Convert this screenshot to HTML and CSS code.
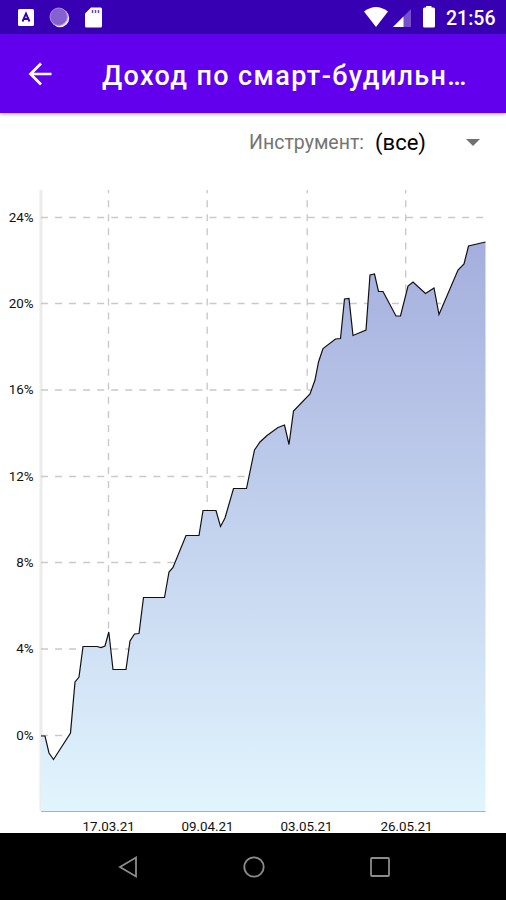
FILE: index.html
```html
<!DOCTYPE html>
<html lang="ru">
<head>
    <meta charset="UTF-8">
    <meta name="viewport" content="width=device-width, initial-scale=1.0">
    <title>Доход по смарт-будильнику</title>
    <link rel="stylesheet" href="styles.css">
</head>
<body>
    <div class="status-bar">
        <svg class="status-icons" width="110" height="34" viewBox="0 0 110 34">
            <rect x="18" y="9" width="16" height="17" rx="1.5" fill="#fff"/>
            <path d="M22.500 21.500L26 13.500L29.500 21.500M24 19H28" fill="none" stroke="#3700b3" stroke-width="1.900"/>
            <circle cx="60" cy="18" r="9.2" fill="#eee5fa"/>
            <circle cx="58.7" cy="16.7" r="8.7" fill="#8560d0"/>
            <circle cx="58.7" cy="16.7" r="8.7" fill="none" stroke="#a98be0"/>
            <path d="M91 7.500H100.500Q102 7.500 102 9V26Q102 27.500 100.500 27.500H86.500Q85 27.500 85 26V13.500Z" fill="#fff"/>
            <path d="M92.500 10V13M95.500 10V13M98.500 10V13" stroke="#6b45c4" stroke-width="1.5"/>
        </svg>
        <svg class="status-icons" width="76" height="34" viewBox="0 0 76 34">
            <path d="M1 11.500Q13 2.500 25 11.500L13 27Z" fill="#fff"/>
            <path d="M48 9V27H30Z" fill="#7650cc"/>
            <path d="M40.500 16.500V27H30Z" fill="#fff"/>
            <path d="M63 7.500V6H68.500V7.500H70.500Q72 7.500 72 9V26Q72 27.500 70.500 27.500H61.500Q60 27.500 60 26V9Q60 7.500 61.500 7.500Z" fill="#fff"/>
        </svg>
        <span class="clock">21:56</span>
    </div>

    <header class="app-bar">
        <svg class="back" width="24" height="24" viewBox="0 0 24 24">
            <path d="M23.500 12H2.500M13 1.500L2.500 12L13 22.500" fill="none" stroke="#fff" stroke-width="2.700"/>
        </svg>
        <h1>Доход по смарт-будильн…</h1>
    </header>

    <div class="filter">
        <span class="filter-label">Инструмент:</span>
        <span class="filter-value">(все)</span>
        <span class="arrow"></span>
    </div>

    <main>
        <svg class="chart" width="506" height="661" viewBox="0 172 506 661">
            <defs>
                <linearGradient id="fill" gradientUnits="userSpaceOnUse" x1="0" y1="190" x2="0" y2="811">
                    <stop offset="0" stop-color="#9fa8da"/>
                    <stop offset="1" stop-color="#e1f5fe"/>
                </linearGradient>
            </defs>
            <path class="axis-y" d="M41 190V811"/>
            <g class="grid">
                <path d="M41 217.500H485.500M41 303.500H485.500M41 390H485.500M41 476.500H485.500M41 562.500H485.500M41 649H485.500M41 735.500H485.500"/>
                <path d="M108.500 811V190M207.200 811V190M307.200 811V190M405.700 811V190"/>
            </g>
            <path id="area" fill="url(#fill)"/>
            <path id="line" class="line"/>
            <path class="axis-x" d="M41 811.500H485.500"/>
            <g class="labels-y">
                <text x="33.500" y="221.500">24%</text>
                <text x="33.500" y="307.500">20%</text>
                <text x="33.500" y="394">16%</text>
                <text x="33.500" y="480.500">12%</text>
                <text x="33.500" y="566.500">8%</text>
                <text x="33.500" y="653">4%</text>
                <text x="33.500" y="739.500">0%</text>
            </g>
            <g class="labels-x">
                <text x="108.700" y="830.500">17.03.21</text>
                <text x="207.500" y="830.500">09.04.21</text>
                <text x="306.500" y="830.500">03.05.21</text>
                <text x="406.500" y="830.500">26.05.21</text>
            </g>
        </svg>
    </main>

    <nav class="nav-bar">
        <svg width="22" height="24" viewBox="0 0 22 24">
            <path d="M19 2.500V21.500L3 12Z"/>
        </svg>
        <svg width="22" height="24" viewBox="0 0 22 24">
            <circle cx="11" cy="12" r="9.700"/>
        </svg>
        <svg width="22" height="24" viewBox="0 0 22 24">
            <rect x="2" y="3" width="18" height="18" rx="1"/>
        </svg>
    </nav>

    <script>
        const points = [
            [41, 736], [45, 736], [49, 753], [53.5, 759.5], [70.5, 733], [75, 682], [79, 677],
            [83, 646.5], [97, 646.5], [101, 647.5], [105, 646], [108.8, 632], [113, 669.5],
            [126, 669.5], [130, 641], [134.5, 634], [139, 633.5], [143.5, 597.5], [164.5, 597.5],
            [169, 572], [173, 567.5], [186, 535.5], [199, 535.5], [203, 510.5], [216, 510.5],
            [220.5, 526.5], [225, 518], [233.5, 488.5], [246.5, 488.5], [254.5, 450], [260, 442],
            [267, 435.5], [278, 427.5], [284.5, 425], [289, 444.5], [293.5, 411], [310, 394],
            [315, 380], [318.5, 362], [323, 348.5], [335.5, 339], [340.5, 338.5], [344.5, 299],
            [349, 298.5], [353, 335.5], [366, 330], [370, 275], [374.5, 274], [378.5, 291.5],
            [383, 291.5], [396, 316], [400.5, 316], [408, 286], [413, 282], [425.5, 293.5],
            [434, 288], [439, 314.5], [458, 270], [464, 264], [468.5, 246], [485.5, 242]
        ];
        const path = 'M' + points.join('L');
        document.getElementById('line').setAttribute('d', path);
        document.getElementById('area').setAttribute('d', path + 'V811H41Z');
    </script>
</body>
</html>
```
FILE: styles.css
```css
body {
    font-family: Roboto, sans-serif;
    margin: 0;
    height: 900px;
    display: flex;
    flex-direction: column;
    background-color: #fff;
    overflow: hidden;
}
svg {
    display: block;
    flex-shrink: 0;
}
.status-bar {
    height: 34px;
    display: flex;
    align-items: center;
    background-color: #3700b3;
    color: #fff;
}
.status-icons:first-child {
    margin-right: 253px;
}
.clock {
    margin-left: 7px;
    padding-top: 3px;
    font-size: 19.5px;
    font-weight: 500;
}
.app-bar {
    height: 79px;
    display: flex;
    align-items: center;
    background-color: #6200ee;
    color: #fff;
    box-shadow: 0 1px 4px rgba(0, 0, 0, 0.35);
}
.back {
    margin-left: 28px;
    margin-right: 50px;
}
h1 {
    margin: 4px 0 0;
    font-size: 27px;
    font-weight: 500;
    letter-spacing: 1.38px;
    white-space: nowrap;
}
.filter {
    height: 59px;
    box-sizing: border-box;
    padding-right: 26px;
    display: flex;
    justify-content: flex-end;
    align-items: center;
}
.filter-label {
    color: #757575;
    font-size: 19.5px;
}
.filter-value {
    margin-left: 11px;
    font-size: 22px;
    color: #000;
}
.arrow {
    margin-left: 40px;
    border: 7px solid transparent;
    border-top-color: #707070;
    border-bottom: 0;
}
.axis-y {
    stroke: #ececec;
    stroke-width: 3;
}
.axis-x {
    stroke: #a5b3bc;
}
.grid {
    fill: none;
    stroke: #c9c9c9;
    stroke-width: 1.4;
    stroke-dasharray: 7 7.04;
}
.line {
    fill: none;
    stroke: #111;
    stroke-width: 1.2;
}
.labels-y, .labels-x {
    font-size: 13.4px;
    fill: #111;
}
.labels-y {
    text-anchor: end;
}
.labels-x {
    text-anchor: middle;
}
.nav-bar {
    height: 67px;
    padding-left: 1px;
    display: flex;
    justify-content: center;
    align-items: center;
    gap: 104px;
    background-color: #000;
}
.nav-bar svg {
    fill: none;
    stroke: #8c8c8c;
    stroke-width: 1.8;
}
```
